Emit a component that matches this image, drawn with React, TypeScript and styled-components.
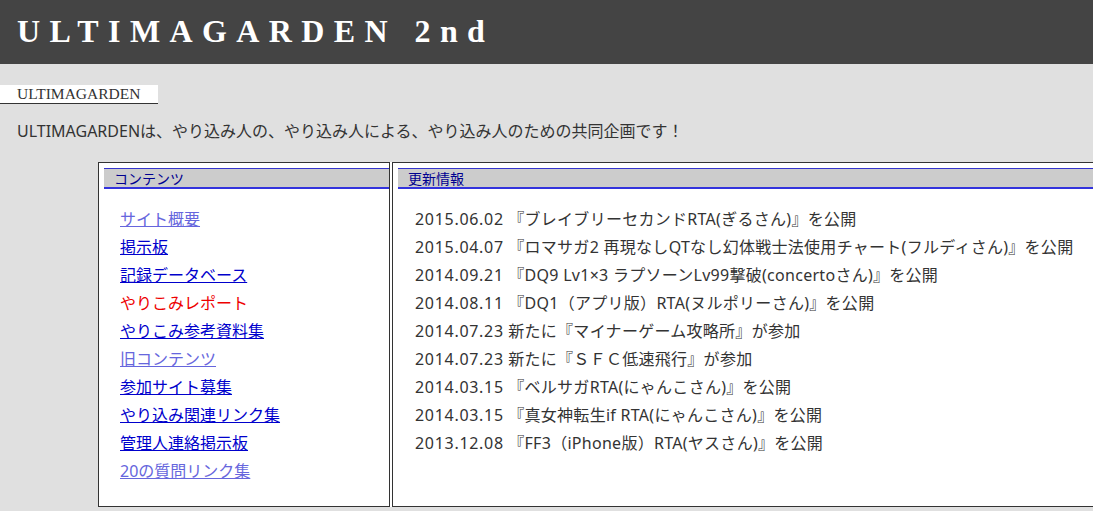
import React from 'react';
import styled, { createGlobalStyle } from 'styled-components';

const GlobalStyle = createGlobalStyle`
    html, body {
        margin: 0;
        padding: 0;
        background: #e0e0e0;
        overflow: hidden;
    }
    body {
        font-family: 'Noto Sans', 'Noto Sans CJK JP', sans-serif;
    }
`;

const Header = styled.header`
    height: 64px;
    background: #444444;
    padding-left: 17px;
`;

const Title = styled.h1`
    margin: 0;
    font-family: 'Liberation Serif', 'Times New Roman', serif;
    font-weight: bold;
    font-size: 32px;
    line-height: 62px;
    letter-spacing: 9.4px;
    color: #ffffff;
    white-space: nowrap;
`;

const SiteName = styled.div`
    margin-top: 21px;
    width: 141px;
    height: 18px;
    padding-left: 17px;
    background: #ffffff;
    border-bottom: 1px solid #333333;
    font-family: 'Liberation Serif', 'Times New Roman', serif;
    font-size: 15.5px;
    line-height: 18px;
    color: #333333;
`;

const Intro = styled.p`
    margin: 15px 0 0 17px;
    font-size: 16px;
    line-height: 24px;
    color: #333333;
    white-space: nowrap;
`;

const Table = styled.div`
    display: flex;
    gap: 2px;
    margin: 19px 0 0 98px;
    width: 1100px;
    height: 345px;
    background: #ffffff;
`;

const Cell = styled.div<{ $width: number }>`
    box-sizing: border-box;
    flex: 0 0 ${({ $width }) => $width}px;
    height: 100%;
    padding: 5px 0 0 5px;
    background: #ffffff;
    border: 1px solid #333333;
`;

const CellHeader = styled.div`
    height: 18px;
    padding-left: 10px;
    background: #cccccc;
    border-top: 1px solid #3333cc;
    border-bottom: 2px solid #3333dd;
    font-family: 'Noto Sans CJK JP', sans-serif;
    font-size: 14px;
    line-height: 18px;
    color: #000090;
`;

const List = styled.ul<{ $indent?: number }>`
    list-style: none;
    margin: 16px 0 0;
    padding-left: ${({ $indent }) => $indent ?? 16}px;
    font-size: 16px;
    line-height: 28px;
    white-space: nowrap;
`;

const LinkItem = styled.a<{ $kind: 'link' | 'visited' | 'hot' }>`
    color: ${({ $kind }) =>
        $kind === 'hot' ? '#ee0000' : $kind === 'visited' ? '#6666dd' : '#0000cc'};
    text-decoration: ${({ $kind }) => ($kind === 'hot' ? 'none' : 'underline')};
    cursor: pointer;
`;

const News = styled.li`
    color: #333333;
    letter-spacing: 0.28px;
`;

const NewsDate = styled.span`
    letter-spacing: 0.7px;
`;

const links: { label: string; kind: 'link' | 'visited' | 'hot' }[] = [
    { label: 'サイト概要', kind: 'visited' },
    { label: '掲示板', kind: 'link' },
    { label: '記録データベース', kind: 'link' },
    { label: 'やりこみレポート', kind: 'hot' },
    { label: 'やりこみ参考資料集', kind: 'link' },
    { label: '旧コンテンツ', kind: 'visited' },
    { label: '参加サイト募集', kind: 'link' },
    { label: 'やり込み関連リンク集', kind: 'link' },
    { label: '管理人連絡掲示板', kind: 'link' },
    { label: '20の質問リンク集', kind: 'visited' },
];

const news: [string, string][] = [
    ['2015.06.02', '『ブレイブリーセカンドRTA(ぎるさん)』を公開'],
    ['2015.04.07', '『ロマサガ2 再現なしQTなし幻体戦士法使用チャート(フルディさん)』を公開'],
    ['2014.09.21', '『DQ9 Lv1×3 ラプソーンLv99撃破(concertoさん)』を公開'],
    ['2014.08.11', '『DQ1（アプリ版）RTA(ヌルポリーさん)』を公開'],
    ['2014.07.23', '新たに『マイナーゲーム攻略所』が参加'],
    ['2014.07.23', '新たに『ＳＦＣ低速飛行』が参加'],
    ['2014.03.15', '『ベルサガRTA(にゃんこさん)』を公開'],
    ['2014.03.15', '『真女神転生if RTA(にゃんこさん)』を公開'],
    ['2013.12.08', '『FF3（iPhone版）RTA(ヤスさん)』を公開'],
];

export default function App() {
    return (
        <>
            <GlobalStyle />
            <Header>
                <Title>ULTIMAGARDEN 2nd</Title>
            </Header>
            <SiteName>ULTIMAGARDEN</SiteName>
            <Intro>ULTIMAGARDENは、やり込み人の、やり込み人による、やり込み人のための共同企画です！</Intro>
            <Table>
                <Cell $width={292}>
                    <CellHeader>コンテンツ</CellHeader>
                    <List>
                        {links.map((l) => (
                            <li key={l.label}>
                                <LinkItem $kind={l.kind}>{l.label}</LinkItem>
                            </li>
                        ))}
                    </List>
                </Cell>
                <Cell $width={760}>
                    <CellHeader>更新情報</CellHeader>
                    <List $indent={17}>
                        {news.map(([date, text], i) => (
                            <News key={i}>
                                <NewsDate>{date}</NewsDate> {text}
                            </News>
                        ))}
                    </List>
                </Cell>
            </Table>
        </>
    );
}
